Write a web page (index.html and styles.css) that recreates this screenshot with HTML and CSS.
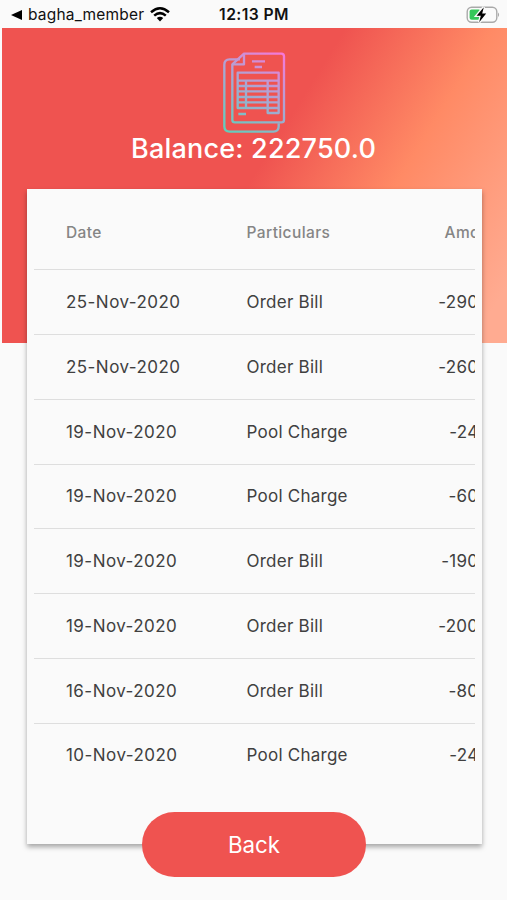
FILE: index.html
```html
<!DOCTYPE html>
<html lang="en">
<head>
<meta charset="utf-8">
<title>Balance</title>
<link rel="stylesheet" href="styles.css">
</head>
<body>
<header class="status">
  <div class="status-left">
    <svg class="back-arrow" viewBox="0 0 11 10"><path d="M0 5 11 0V10Z"/></svg>
    <span class="app-name">bagha_member</span>
    <svg class="wifi" viewBox="0 0 20 15"><g fill="none" stroke="#000" stroke-width="2.5"><path d="M1 5.2Q10-2.6 19 5.2"/><path d="M4.2 8.6Q10 3.6 15.8 8.6"/></g><path d="M6.8 11Q10 8.4 13.2 11L10 14.4Z"/></svg>
  </div>
  <div class="clock">12:13 PM</div>
  <svg class="battery" viewBox="0 0 34 18"><rect x="1.2" y="1.2" width="29.6" height="15" rx="4.5" fill="none" stroke="#a9a9a9" stroke-width="1.4"/><path d="M32 6.5Q34.2 8.7 32 11Z" fill="#a9a9a9"/><rect x="3.6" y="3.6" width="11" height="10.2" rx="2" fill="#34c759"/><path d="M17.8 1.2 10.6 9.8H14.8L13.2 16.2 20.2 7.6H16.2Z" fill="#000" stroke="#fafafa" stroke-width="2.6" paint-order="stroke"/></svg>
</header>
<main>
  <section class="hero">
    <svg class="bill-icon" viewBox="51 33 198 252">
      <defs><linearGradient id="g" gradientUnits="userSpaceOnUse" x1="70" y1="280" x2="235" y2="40"><stop offset="0" stop-color="#5fcfbb"/><stop offset=".5" stop-color="#a5a9d2"/><stop offset="1" stop-color="#f877d8"/></linearGradient></defs>
      <g fill="none" stroke="url(#g)" stroke-width="7" stroke-linejoin="round">
        <path d="M105 58H74Q58 58 58 74V259Q58 275 74 275H205Q221 275 221 259V250"/>
        <path d="M82 73 117 41H229Q237 41 237 49V239Q237 247 229 247H90Q82 247 82 239Z"/>
        <path d="M117 42V73H83M141 64H180M149 81H171M100 222H123"/>
        <path d="M98 98H221V219H188V204H98ZM98 122H221M98 138H221M98 154H221M98 171H221M98 187H221M188 204H221M123 122V204M188 122V204"/>
      </g>
    </svg>
    <h1 class="balance">Balance: 222750.0</h1>
  </section>
  <section class="card">
    <div class="table">
      <div class="row head"><span>Date</span><span>Particulars</span><span class="amount">Amount</span></div>
      <div class="row"><span class="date">25-Nov-2020</span><span>Order Bill</span><span class="amount">-290.0</span></div>
      <div class="row"><span class="date">25-Nov-2020</span><span>Order Bill</span><span class="amount">-260.0</span></div>
      <div class="row"><span class="date">19-Nov-2020</span><span>Pool Charge</span><span class="amount">-24.0</span></div>
      <div class="row"><span class="date">19-Nov-2020</span><span>Pool Charge</span><span class="amount">-60.0</span></div>
      <div class="row"><span class="date">19-Nov-2020</span><span>Order Bill</span><span class="amount">-190.0</span></div>
      <div class="row"><span class="date">19-Nov-2020</span><span>Order Bill</span><span class="amount">-200.0</span></div>
      <div class="row"><span class="date">16-Nov-2020</span><span>Order Bill</span><span class="amount">-80.0</span></div>
      <div class="row"><span class="date">10-Nov-2020</span><span>Pool Charge</span><span class="amount">-24.0</span></div>
    </div>
  </section>
  <button class="back">Back</button>
</main>
</body>
</html>
```
FILE: styles.css
```css
* { box-sizing: border-box; }
body {
  margin: 0;
  height: 900px;
  overflow: hidden;
  background: #fafafa;
  font-family: Inter, "Liberation Sans", sans-serif;
  color: #404040;
}
.status {
  display: grid;
  grid-template-columns: 1fr auto 1fr;
  align-items: center;
  height: 28px;
  padding: 1px 7px 0 11px;
  color: #111;
}
.status-left { display: flex; align-items: center; }
.back-arrow { width: 11px; height: 10px; margin-right: 6px; }
.app-name { font-size: 15.5px; letter-spacing: .2px; }
.wifi { width: 20px; height: 15px; margin-left: 6px; }
.clock { font-size: 15.7px; font-weight: 600; letter-spacing: .4px; margin-left: -3px; }
.battery { width: 34px; height: 18px; justify-self: end; }
.hero {
  display: flex;
  flex-direction: column;
  align-items: center;
  height: 314.5px;
  margin-left: 2px;
  padding-top: 23px;
  background: linear-gradient(121.9deg, #ef5350 49%, #ff8a65 70%, #ffab91 95%);
}
.bill-icon { width: 66px; height: 84px; }
.balance {
  margin: -2px 0 0 -2px;
  font-size: 27px;
  line-height: 32px;
  font-weight: 500;
  letter-spacing: .2px;
  color: #fff;
  white-space: nowrap;
}
.card {
  width: 455px;
  height: 655px;
  margin: -154px 0 0 27px;
  padding: 0 7px;
  background: #fafafa;
  box-shadow: 0 3px 5px rgba(0, 0, 0, .34);
}
.table { width: 441px; overflow: hidden; }
.row {
  display: grid;
  grid-template-columns: 180.5px 1fr auto;
  align-items: center;
  width: 491.5px;
  height: 64.75px;
  padding: 0 32px;
  border-top: 1px solid #dedede;
  font-size: 17px;
  letter-spacing: .25px;
  white-space: nowrap;
}
.date { letter-spacing: .45px; }
.row.head {
  width: 503px;
  height: 80.75px;
  padding-top: 8px;
  border-top: 0;
  font-size: 15.5px;
  font-weight: 500;
  letter-spacing: .4px;
  color: #858585;
}
.back {
  display: block;
  width: 224px;
  height: 65px;
  margin: -32px 0 0 142px;
  padding: 0;
  border: 0;
  border-radius: 33px;
  background: #ef5350;
  color: #fff;
  font: 400 22.3px Inter, "Liberation Sans", sans-serif;
  position: relative;
}
```
